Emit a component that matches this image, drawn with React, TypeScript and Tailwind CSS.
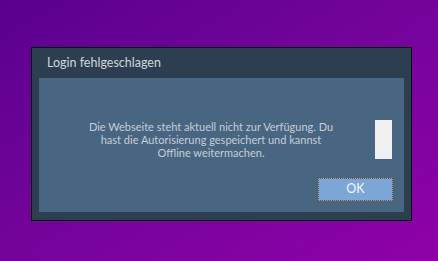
export default function App() {
  return (
    <div
      className="w-[438px] h-[261px] bg-gradient-to-br from-[#5a0090] to-[#9000a8] pt-[47px] pl-[31px]"
      style={{ fontFamily: 'Lato, "Noto Sans", sans-serif' }}
    >
      <div className="w-[381px] h-[174px] border border-black bg-[#2d3e51] flex flex-col">
        <div className="h-[30px] pl-[15px] pt-[8px] text-[12.5px] leading-[14px] text-[#d3d7dc]">
          Login fehlgeschlagen
        </div>
        <div className="mx-[7px] h-[134px] bg-[#486582] flex flex-col">
          <div className="flex pt-[42px]">
            <div className="ml-[10px] w-[324px] text-center text-[11px] leading-[13px] text-[#c6ced6]">
              <p>Die Webseite steht aktuell nicht zur Verfügung. Du</p>
              <p>hast die Autorisierung gespeichert und kannst</p>
              <p>Offline weitermachen.</p>
            </div>
            <div className="ml-[2px] w-[17px] h-[39px] bg-[#f0f0f0]" />
          </div>
          <div className="flex justify-end pr-[11px] mt-auto mb-[11px]">
            <button className="w-[75px] h-[23px] bg-[#7ba6d6] border border-dotted border-[#8a4a10] text-[12.5px] text-[#f4f6fa]">
              OK
            </button>
          </div>
        </div>
      </div>
    </div>
  );
}
